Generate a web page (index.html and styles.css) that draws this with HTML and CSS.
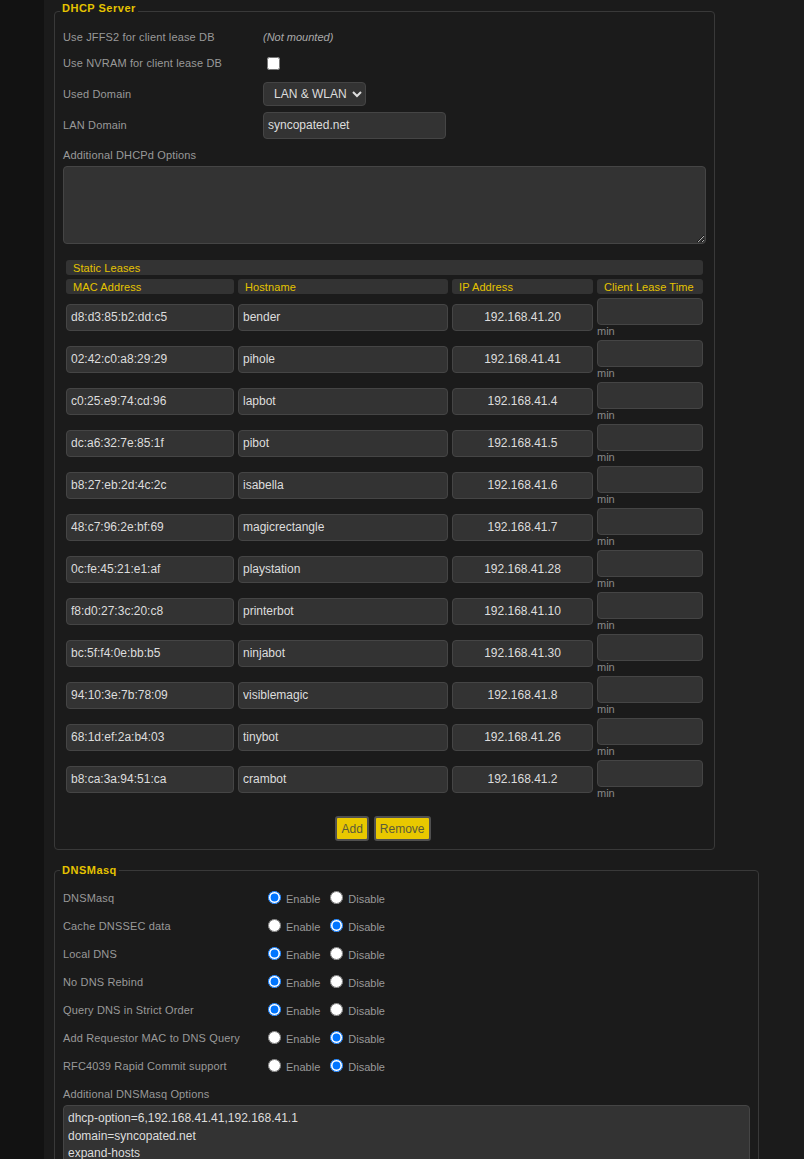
FILE: index.html
```html
<!DOCTYPE html>
<html lang="en">
<head>
<meta charset="utf-8">
<title>DHCP / DNS</title>
<link rel="stylesheet" href="styles.css">
</head>
<body>
<div class="shell">
  <div class="side"></div>
  <main class="content">
    <fieldset class="box box-dhcp">
      <legend class="legend-dhcp">DHCP Server</legend>
      <div class="field h20">
        <span class="flabel">Use JFFS2 for client lease DB</span>
        <span class="note">(Not mounted)</span>
      </div>
      <div class="field h32">
        <span class="flabel">Use NVRAM for client lease DB</span>
        <input type="checkbox" class="check">
      </div>
      <div class="field h30">
        <span class="flabel">Used Domain</span>
        <select class="sel"><option>LAN &amp; WLAN</option></select>
      </div>
      <div class="field h32">
        <span class="flabel">LAN Domain</span>
        <input type="text" class="txt txt-domain" value="syncopated.net">
      </div>
      <div class="blabel">Additional DHCPd Options</div>
      <textarea class="area area-dhcp"></textarea>

      <div class="leases">
        <div class="lhead lhead-all">Static Leases</div>
        <div class="lhead">MAC Address</div>
        <div class="lhead">Hostname</div>
        <div class="lhead">IP Address</div>
        <div class="lhead lhead-c">Client Lease Time</div>

        <input class="txt cell" value="d8:d3:85:b2:dd:c5"><input class="txt cell" value="bender"><input class="txt cell ip" value="192.168.41.20"><div class="lease"><input class="txt lin"><span class="min">min</span></div>
        <input class="txt cell" value="02:42:c0:a8:29:29"><input class="txt cell" value="pihole"><input class="txt cell ip" value="192.168.41.41"><div class="lease"><input class="txt lin"><span class="min">min</span></div>
        <input class="txt cell" value="c0:25:e9:74:cd:96"><input class="txt cell" value="lapbot"><input class="txt cell ip" value="192.168.41.4"><div class="lease"><input class="txt lin"><span class="min">min</span></div>
        <input class="txt cell" value="dc:a6:32:7e:85:1f"><input class="txt cell" value="pibot"><input class="txt cell ip" value="192.168.41.5"><div class="lease"><input class="txt lin"><span class="min">min</span></div>
        <input class="txt cell" value="b8:27:eb:2d:4c:2c"><input class="txt cell" value="isabella"><input class="txt cell ip" value="192.168.41.6"><div class="lease"><input class="txt lin"><span class="min">min</span></div>
        <input class="txt cell" value="48:c7:96:2e:bf:69"><input class="txt cell" value="magicrectangle"><input class="txt cell ip" value="192.168.41.7"><div class="lease"><input class="txt lin"><span class="min">min</span></div>
        <input class="txt cell" value="0c:fe:45:21:e1:af"><input class="txt cell" value="playstation"><input class="txt cell ip" value="192.168.41.28"><div class="lease"><input class="txt lin"><span class="min">min</span></div>
        <input class="txt cell" value="f8:d0:27:3c:20:c8"><input class="txt cell" value="printerbot"><input class="txt cell ip" value="192.168.41.10"><div class="lease"><input class="txt lin"><span class="min">min</span></div>
        <input class="txt cell" value="bc:5f:f4:0e:bb:b5"><input class="txt cell" value="ninjabot"><input class="txt cell ip" value="192.168.41.30"><div class="lease"><input class="txt lin"><span class="min">min</span></div>
        <input class="txt cell" value="94:10:3e:7b:78:09"><input class="txt cell" value="visiblemagic"><input class="txt cell ip" value="192.168.41.8"><div class="lease"><input class="txt lin"><span class="min">min</span></div>
        <input class="txt cell" value="68:1d:ef:2a:b4:03"><input class="txt cell" value="tinybot"><input class="txt cell ip" value="192.168.41.26"><div class="lease"><input class="txt lin"><span class="min">min</span></div>
        <input class="txt cell" value="b8:ca:3a:94:51:ca"><input class="txt cell" value="crambot"><input class="txt cell ip" value="192.168.41.2"><div class="lease"><input class="txt lin"><span class="min">min</span></div>
      </div>
      <div class="btns">
        <button class="btn">Add</button>
        <button class="btn">Remove</button>
      </div>
    </fieldset>

    <fieldset class="box box-dns">
      <legend>DNSMasq</legend>
      <div class="field h28">
        <span class="flabel">DNSMasq</span>
        <label class="opt"><input type="radio" name="r1" checked>Enable</label>
        <label class="opt"><input type="radio" name="r1">Disable</label>
      </div>
      <div class="field h28">
        <span class="flabel">Cache DNSSEC data</span>
        <label class="opt"><input type="radio" name="r2">Enable</label>
        <label class="opt"><input type="radio" name="r2" checked>Disable</label>
      </div>
      <div class="field h28">
        <span class="flabel">Local DNS</span>
        <label class="opt"><input type="radio" name="r3" checked>Enable</label>
        <label class="opt"><input type="radio" name="r3">Disable</label>
      </div>
      <div class="field h28">
        <span class="flabel">No DNS Rebind</span>
        <label class="opt"><input type="radio" name="r4" checked>Enable</label>
        <label class="opt"><input type="radio" name="r4">Disable</label>
      </div>
      <div class="field h28">
        <span class="flabel">Query DNS in Strict Order</span>
        <label class="opt"><input type="radio" name="r5" checked>Enable</label>
        <label class="opt"><input type="radio" name="r5">Disable</label>
      </div>
      <div class="field h28">
        <span class="flabel">Add Requestor MAC to DNS Query</span>
        <label class="opt"><input type="radio" name="r6">Enable</label>
        <label class="opt"><input type="radio" name="r6" checked>Disable</label>
      </div>
      <div class="field h28">
        <span class="flabel">RFC4039 Rapid Commit support</span>
        <label class="opt"><input type="radio" name="r7">Enable</label>
        <label class="opt"><input type="radio" name="r7" checked>Disable</label>
      </div>
      <div class="blabel">Additional DNSMasq Options</div>
      <textarea class="area area-dns">dhcp-option=6,192.168.41.41,192.168.41.1
domain=syncopated.net
expand-hosts</textarea>
    </fieldset>
  </main>
</div>
</body>
</html>
```

FILE: styles.css
```css
html, body {
  margin: 0;
  padding: 0;
  background: #1b1b1b;
  height: 100%;
  overflow: hidden;
}

body {
  font-family: "Liberation Sans", Arial, sans-serif;
  font-size: 11px;
  color: #999;
}

.shell {
  display: flex;
  min-height: 1159px;
}

.side {
  width: 44px;
  flex: none;
  background: #121212;
}

.content {
  flex: 1;
  padding: 1px 0 0 10px;
  background: #1b1b1b;
}

.box {
  box-sizing: border-box;
  margin: 0;
  border: 1px solid #393939;
  border-radius: 4px;
  padding: 6px 8px 8px 8px;
  min-width: 0;
}

.box-dhcp { width: 661px; }
.box-dns { width: 705px; margin-top: 13px; padding-top: 7px; }

legend {
  font-weight: bold;
  font-size: 11px;
  line-height: 14px;
  color: #e5c300;
  padding: 0 2px;
  margin-left: -3px;
  letter-spacing: 0.5px;
}

.legend-dhcp {
  padding-bottom: 6px;
}

.field {
  display: flex;
  align-items: center;
}

.h20 { height: 20px; }
.h28 { height: 28px; }
.h30 { height: 30px; }
.h32 { height: 32px; }

.flabel {
  width: 200px;
  flex: none;
  letter-spacing: 0.15px;
}

.note {
  font-style: italic;
  color: #aaa;
  font-size: 11px;
}

.check {
  width: 13px;
  height: 13px;
  margin: 0 0 0 4px;
}

.sel {
  height: 24px;
  width: 103px;
  box-sizing: border-box;
  background: #333;
  color: #ddd;
  border: 1px solid #444;
  border-radius: 4px;
  font-family: "Liberation Sans", Arial, sans-serif;
  font-size: 12px;
  padding: 0 0 0 6px;
  color-scheme: dark;
}

.txt {
  box-sizing: border-box;
  background: #333;
  color: #ddd;
  border: 1px solid #454545;
  border-radius: 4px;
  font-family: "Liberation Sans", Arial, sans-serif;
  font-size: 12px;
  padding: 0 4px;
  margin: 0;
  outline: none;
}

.txt-domain {
  width: 183px;
  height: 27px;
}

.blabel {
  margin-top: 7px;
  line-height: 14px;
  letter-spacing: 0.15px;
}

.area {
  display: block;
  box-sizing: border-box;
  background: #333;
  color: #ddd;
  border: 1px solid #454545;
  border-radius: 4px;
  font-family: "Liberation Sans", Arial, sans-serif;
  font-size: 12px;
  line-height: 17.5px;
  padding: 2px 4px;
  margin: 4px 0 0 0;
  width: 100%;
  outline: none;
}

.area-dhcp { height: 78px; }
.area-dns { height: 80px; resize: none; padding-top: 4px; }

.leases {
  display: grid;
  grid-template-columns: 168px 210px 141px 106px;
  column-gap: 4px;
  row-gap: 4px;
  margin: 16px 3px 0 3px;
}

.lhead {
  background: #333;
  color: #e5c300;
  border-radius: 3px;
  height: 15px;
  line-height: 16px;
  padding-left: 7px;
  letter-spacing: 0.1px;
}

.lhead-all { grid-column: 1 / -1; }
.lhead-c { padding-left: 7px; }

.cell {
  height: 27px;
  width: 100%;
  align-self: center;
}

.ip { text-align: center; }

.lease {
  display: flex;
  flex-direction: column;
}

.lin {
  height: 27px;
  width: 100%;
}

.min {
  font-size: 11px;
  line-height: 13px;
  height: 11px;
  color: #888;
}

.btns {
  display: flex;
  justify-content: center;
  gap: 5px;
  margin-top: 18px;
  padding-right: 3px;
}

.btn {
  height: 25px;
  padding: 0 4px;
  background: #e9c800;
  color: #5b5b3a;
  border: 2px solid #505050;
  border-radius: 3px;
  font-family: "Liberation Sans", Arial, sans-serif;
  font-size: 12px;
}

.opt {
  display: flex;
  align-items: center;
  margin-right: 5px;
  padding-top: 2px;
}

.opt input {
  width: 13px;
  height: 13px;
  margin: 0 5px 3px 5px;
}
```
